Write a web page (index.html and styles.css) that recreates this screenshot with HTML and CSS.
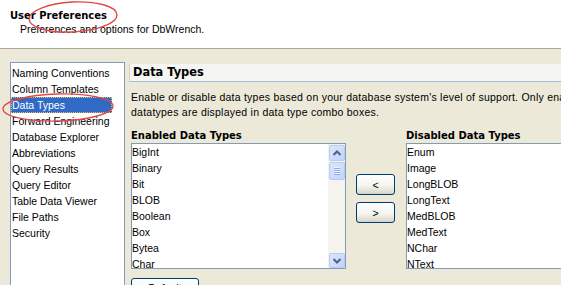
FILE: index.html
```html
<!DOCTYPE html>
<html>
<head>
<meta charset="utf-8">
<link rel="stylesheet" href="styles.css">
</head>
<body>
<div class="header">
  <div class="h-title">User Preferences</div>
  <div class="h-sub">Preferences and options for DbWrench.</div>
</div>
<div class="main">
  <div class="nav">
    <div class="nav-item">Naming Conventions</div>
    <div class="nav-item">Column Templates</div>
    <div class="nav-item selected">Data Types</div>
    <div class="nav-item">Forward Engineering</div>
    <div class="nav-item">Database Explorer</div>
    <div class="nav-item">Abbreviations</div>
    <div class="nav-item">Query Results</div>
    <div class="nav-item">Query Editor</div>
    <div class="nav-item">Table Data Viewer</div>
    <div class="nav-item">File Paths</div>
    <div class="nav-item">Security</div>
  </div>
  <div class="panel">
    <div class="panel-title">Data Types</div>
    <div class="desc">Enable or disable data types based on your database system's level of support. Only enabled<br>datatypes are displayed in data type combo boxes.</div>
    <div class="lists">
      <div class="col">
        <div class="lbl">Enabled Data Types</div>
        <div class="listbox">
          <div class="items">
            <div>BigInt</div><div>Binary</div><div>Bit</div><div>BLOB</div><div>Boolean</div><div>Box</div><div>Bytea</div><div>Char</div>
          </div>
          <div class="scrollbar">
            <div class="sb-btn sb-up"><svg width="16" height="15" viewBox="0 0 16 15"><polyline points="4.5,9 8,5.5 11.5,9" fill="none" stroke="#4D6185" stroke-width="2"/></svg></div>
            <div class="sb-thumb"><svg width="16" height="18" viewBox="0 0 16 18"><g stroke-width="1"><line x1="5" y1="5.5" x2="11" y2="5.5" stroke="#EEF3FE"/><line x1="5" y1="6.5" x2="11" y2="6.5" stroke="#8FAAE6"/><line x1="5" y1="7.5" x2="11" y2="7.5" stroke="#EEF3FE"/><line x1="5" y1="8.5" x2="11" y2="8.5" stroke="#8FAAE6"/><line x1="5" y1="9.5" x2="11" y2="9.5" stroke="#EEF3FE"/><line x1="5" y1="10.5" x2="11" y2="10.5" stroke="#8FAAE6"/><line x1="5" y1="11.5" x2="11" y2="11.5" stroke="#EEF3FE"/><line x1="5" y1="12.5" x2="11" y2="12.5" stroke="#8FAAE6"/></g></svg></div>
            <div class="sb-space"></div>
            <div class="sb-btn sb-down"><svg width="16" height="15" viewBox="0 0 16 15"><polyline points="4.5,6 8,9.5 11.5,6" fill="none" stroke="#4D6185" stroke-width="2"/></svg></div>
          </div>
        </div>
      </div>
      <div class="moves">
        <button class="xpbtn move">&lt;</button>
        <button class="xpbtn move">&gt;</button>
      </div>
      <div class="col">
        <div class="lbl">Disabled Data Types</div>
        <div class="listbox">
          <div class="items">
            <div>Enum</div><div>Image</div><div>LongBLOB</div><div>LongText</div><div>MedBLOB</div><div>MedText</div><div>NChar</div><div>NText</div>
          </div>
        </div>
      </div>
    </div>
    <button class="xpbtn default">Default</button>
  </div>
</div>
<svg class="annot" width="561" height="285" viewBox="0 0 561 285">
  <ellipse cx="73" cy="17" rx="44" ry="15" transform="rotate(-3 73 17)" fill="none" stroke="#E04848" stroke-width="1.4"/>
  <ellipse cx="58" cy="107.5" rx="55" ry="13.5" transform="rotate(-1.5 58 107.5)" fill="none" stroke="#E04848" stroke-width="1.4"/>
</svg>
</body>
</html>
```
FILE: styles.css
```css
html, body {
  margin: 0;
  padding: 0;
}
body {
  width: 561px;
  height: 285px;
  overflow: hidden;
  position: relative;
  background: #ECE9D8;
  font-family: "Liberation Sans", Arial, sans-serif;
  font-size: 10.5px;
  color: #000;
}
.header {
  background: #fff;
  height: 49px;
  box-sizing: border-box;
  padding: 9px 0 0 10px;
  border-bottom: 1px solid #ACA899;
}
.h-title {
  font-family: "DejaVu Sans", sans-serif;
  font-weight: bold;
  font-size: 10px;
  line-height: 13px;
}
.h-sub {
  line-height: 14px;
  padding-left: 10px;
}
.main {
  display: flex;
  padding: 13px 0 0 10px;
}
.nav {
  flex: none;
  width: 115px;
  height: 240px;
  box-sizing: border-box;
  border: 1px solid #7F9DB9;
  background: #fff;
  padding-top: 2px;
}
.nav-item {
  width: 100px;
  padding-left: 1px;
  line-height: 16px;
  white-space: nowrap;
}
.nav-item.selected {
  background: #316AC5;
  color: #fff;
  outline: 1px dotted #E8C060;
  outline-offset: -1px;
}
.panel {
  flex: 1;
  min-width: 0;
  margin-left: 4px;
}
.panel-title {
  margin-top: 2px;
  height: 17px;
  line-height: 17px;
  background: #F5F5F3;
  border-left: 1px solid #D6D3C6;
  border-bottom: 1px solid #A9BBD6;
  padding-left: 3px;
  font-family: "DejaVu Sans", sans-serif;
  font-weight: bold;
  font-size: 11.4px;
}
.desc {
  margin: 8px 0 0 2px;
  line-height: 15px;
  white-space: nowrap;
  letter-spacing: 0.24px;
}
.lists {
  display: flex;
  margin: 9px 0 0 2px;
}
.col {
  flex: none;
  width: 215px;
}
.lbl {
  font-family: "DejaVu Sans", sans-serif;
  font-weight: bold;
  font-size: 10px;
  line-height: 14px;
  white-space: nowrap;
}
.listbox {
  height: 126px;
  box-sizing: border-box;
  border: 1px solid #7F9DB9;
  background: #fff;
  display: flex;
  overflow: hidden;
}
.items {
  flex: 1;
}
.items div {
  line-height: 16px;
  white-space: nowrap;
}
.scrollbar {
  flex: none;
  width: 17px;
  background: #F4F3EE;
  display: flex;
  flex-direction: column;
}
.sb-btn, .sb-thumb {
  margin-left: 1px;
  width: 16px;
  box-sizing: border-box;
  border: 1px solid #B9CBF3;
  border-radius: 2px;
  background: linear-gradient(135deg, #DCE6FD, #C2D3FB);
  display: flex;
  align-items: center;
  justify-content: center;
}
.sb-btn svg, .sb-thumb svg {
  margin: -1px;
}
.sb-up {
  margin-top: 1px;
  height: 16px;
}
.sb-thumb {
  margin-top: 1px;
  height: 18px;
}
.sb-space {
  flex: 1;
}
.sb-down {
  height: 15px;
}
.moves {
  flex: none;
  display: flex;
  flex-direction: column;
  gap: 7px;
  margin: 45px 11px 0 10px;
}
.xpbtn {
  box-sizing: border-box;
  border: 1px solid #003C74;
  border-radius: 3px;
  background: linear-gradient(#FFFFFF, #F4F4F0 55%, #E3E0D6 85%, #D6D0C5);
  font-family: "Liberation Sans", Arial, sans-serif;
  font-size: 10.5px;
  color: #000;
  padding: 0;
}
.move {
  width: 39px;
  height: 21px;
}
.default {
  display: block;
  margin: 9px 0 0 2px;
  width: 68px;
  height: 23px;
  padding-bottom: 3px;
}
.annot {
  position: absolute;
  left: 0;
  top: 0;
  pointer-events: none;
}
```
